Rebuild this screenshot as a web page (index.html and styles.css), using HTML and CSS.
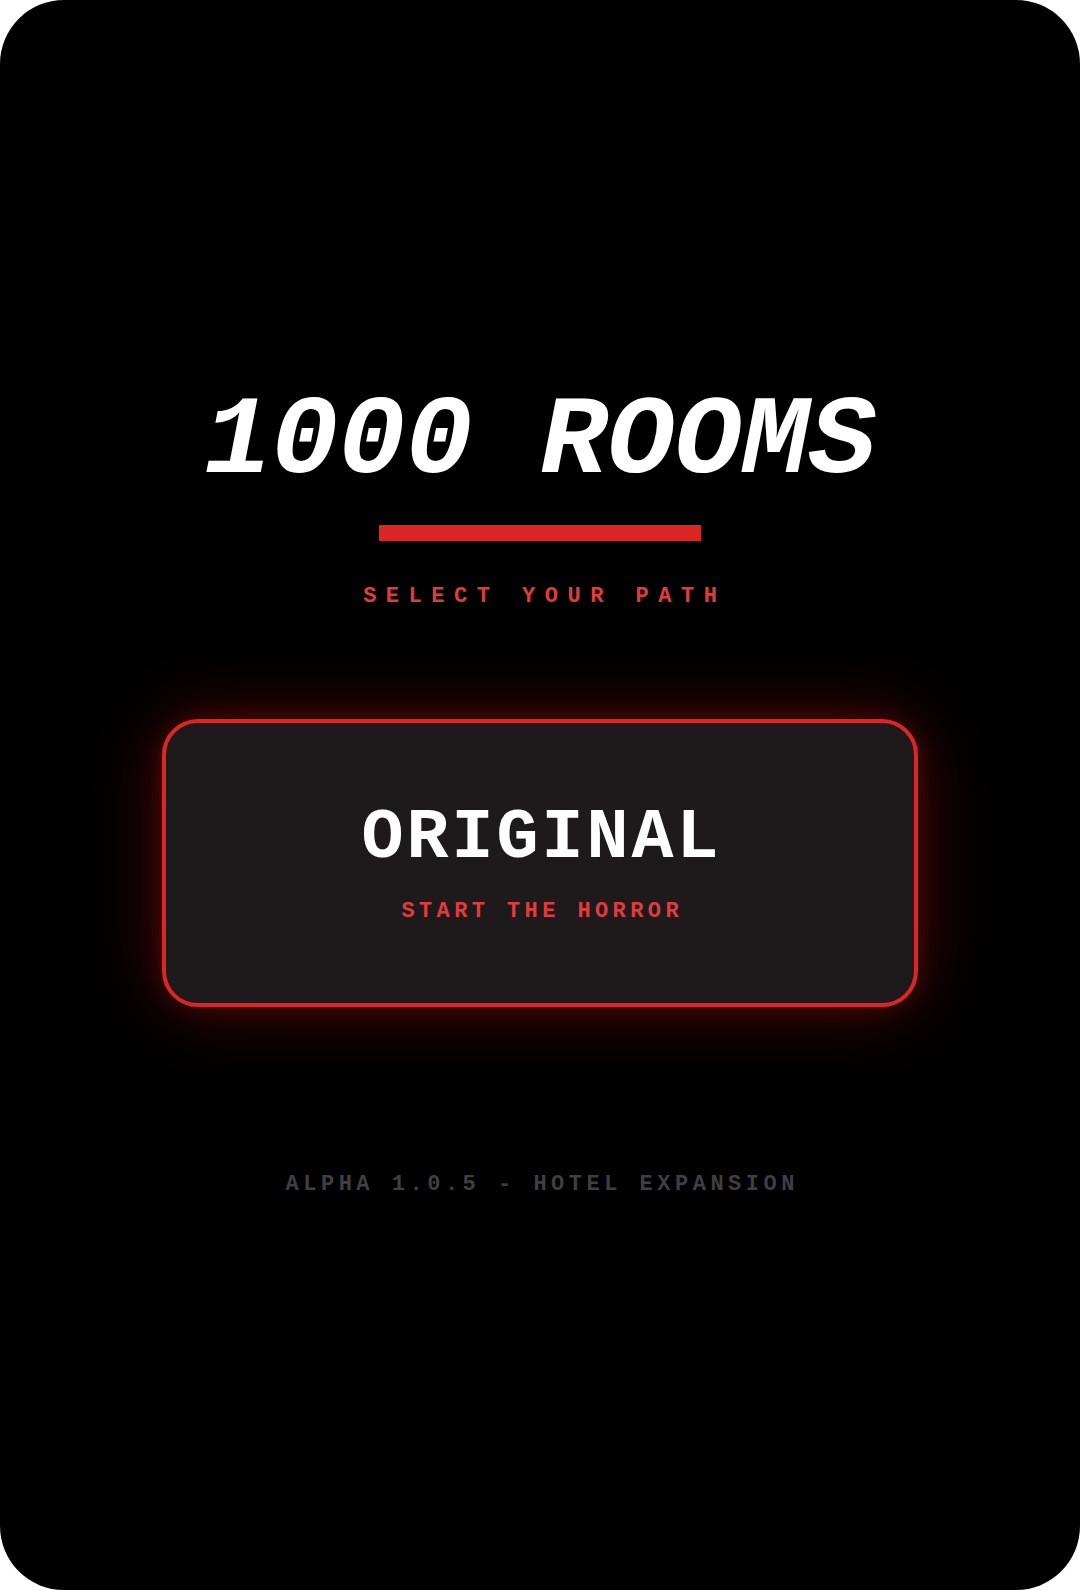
FILE: index.html
```html
<!DOCTYPE html>
<html lang="en">
<head>
<meta charset="utf-8">
<title>1000 Rooms</title>
<link rel="stylesheet" href="styles.css">
</head>
<body>
  <main class="screen">
    <h1 class="title">1000 ROOMS</h1>
    <div class="rule"></div>
    <p class="subtitle">SELECT YOUR PATH</p>
    <button class="mode-card" type="button">
      <span class="mode-name">ORIGINAL</span>
      <span class="mode-tag">START THE HORROR</span>
    </button>
    <p class="version">ALPHA 1.0.5 - HOTEL EXPANSION</p>
  </main>
</body>
</html>
```

FILE: styles.css
```css
html, body {
  margin: 0;
  padding: 0;
  background: #ffffff;
}

.screen {
  width: 1080px;
  height: 1590px;
  box-sizing: border-box;
  border-radius: 64px;
  background: #000000;
  overflow: hidden;
  display: flex;
  flex-direction: column;
  align-items: center;
  padding-top: 387px;
  font-family: "Liberation Mono", "DejaVu Sans Mono", monospace;
}

.title {
  margin: 0;
  font-size: 112px;
  line-height: 1;
  font-weight: bold;
  font-style: italic;
  color: #ffffff;
  letter-spacing: 0;
  white-space: nowrap;
}

.rule {
  width: 322px;
  height: 16px;
  margin-top: 26px;
  background: #dc2626;
}

.subtitle {
  margin: 45px 0 0 0;
  font-size: 22px;
  line-height: 1;
  font-weight: bold;
  color: #e03c3e;
  letter-spacing: 9.5px;
  padding-left: 9.5px;
}

.mode-card {
  margin-top: 111px;
  width: 756px;
  box-sizing: border-box;
  padding: 81px 0 80px;
  border: 4px solid #dc2626;
  border-radius: 36px;
  background: #1e191b;
  box-shadow: 0 0 80px rgba(185, 20, 20, 0.38), 0 0 24px rgba(220, 38, 38, 0.25);
  display: flex;
  flex-direction: column;
  align-items: center;
  font-family: "Liberation Mono", "DejaVu Sans Mono", monospace;
  cursor: pointer;
}

.mode-name {
  font-size: 70px;
  line-height: 1;
  font-weight: bold;
  color: #ffffff;
  letter-spacing: 3px;
  padding-left: 3px;
}

.mode-tag {
  margin-top: 27px;
  font-size: 22px;
  line-height: 1;
  font-weight: bold;
  color: #e03c3e;
  letter-spacing: 4.4px;
  padding-left: 4.4px;
}

.version {
  margin: 167px 0 0 0;
  font-size: 22px;
  line-height: 1;
  font-weight: bold;
  color: #3f3f41;
  letter-spacing: 4.5px;
  padding-left: 4.5px;
}
```
